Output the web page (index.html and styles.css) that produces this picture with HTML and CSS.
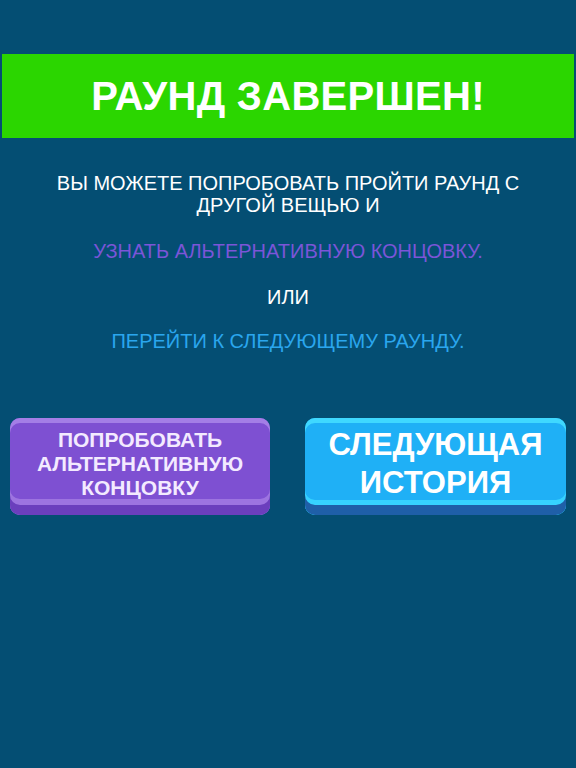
FILE: index.html
```html
<!DOCTYPE html>
<html lang="ru">

<head>
  <meta charset="UTF-8">
  <meta name="viewport" content="width=device-width, initial-scale=1.0">
  <title>Раунд завершен</title>
  <link rel="stylesheet" href="styles.css">
</head>

<body>

  <!-- Green title banner -->
  <header class="banner">
    <h1>РАУНД ЗАВЕРШЕН!</h1>
  </header>

  <!-- Round result message -->
  <div class="message">
    <p class="intro">ВЫ МОЖЕТЕ ПОПРОБОВАТЬ ПРОЙТИ РАУНД С ДРУГОЙ ВЕЩЬЮ И</p>
    <p class="purple">УЗНАТЬ АЛЬТЕРНАТИВНУЮ КОНЦОВКУ.</p>
    <p class="plain">ИЛИ</p>
    <p class="blue">ПЕРЕЙТИ К СЛЕДУЮЩЕМУ РАУНДУ.</p>
  </div>

  <!-- Action buttons -->
  <div class="actions">
    <button class="game-btn alt-btn">ПОПРОБОВАТЬ<br>АЛЬТЕРНАТИВНУЮ<br>КОНЦОВКУ</button>
    <button class="game-btn next-btn">СЛЕДУЮЩАЯ<br>ИСТОРИЯ</button>
  </div>

</body>

</html>
```

FILE: styles.css
```css
/* Reset */
* {
  margin: 0;
  padding: 0;
  box-sizing: border-box;
}

body {
  font-family: 'Liberation Sans', Arial, sans-serif;
  background-color: #044e73;
  color: #fff;
  width: 576px;
  height: 768px;
  overflow: hidden;
}

/* Title banner */
.banner {
  margin: 54px 2px 0;
  height: 84px;
  background-color: #2bd600;
  display: flex;
  align-items: center;
  justify-content: center;
}

.banner h1 {
  font-size: 40px;
  font-weight: bold;
  color: #fff;
  letter-spacing: 0.3px;
}

/* Message text */
.message {
  margin-top: 34px;
  text-align: center;
  font-size: 20px;
  line-height: 22px;
}

.message .intro {
  max-width: 500px;
  margin: 0 auto;
}

.message .purple {
  color: #7b55d8;
  margin-top: 24px;
}

.message .plain {
  margin-top: 24px;
}

.message .blue {
  color: #2aa6ee;
  margin-top: 22px;
}

/* Button row */
.actions {
  display: flex;
  justify-content: space-between;
  padding: 0 10px;
  margin-top: 66px;
}

.game-btn {
  font-family: 'Liberation Sans', Arial, sans-serif;
  font-weight: bold;
  border: none;
  border-radius: 10px;
  height: 97px;
  color: #fff;
  cursor: pointer;
  display: flex;
  align-items: center;
  justify-content: center;
  text-align: center;
  padding-bottom: 5px;
}

/* Purple "alternative ending" button */
.alt-btn {
  width: 260px;
  font-size: 21px;
  line-height: 24px;
  color: #f3eaff;
  background-color: #7e50d2;
  box-shadow: inset 0 5px 0 #a47ee6, inset 0 -10px 0 #6b3fbd, inset 0 -16px 0 #9d74e0;
}

/* Blue "next story" button */
.next-btn {
  width: 261px;
  font-size: 31px;
  line-height: 38px;
  background-color: #1fb0f6;
  box-shadow: inset 0 5px 0 #3fd8ff, inset 0 -10px 0 #1f5fa8, inset 0 -15px 0 #36d2ff;
}
```
